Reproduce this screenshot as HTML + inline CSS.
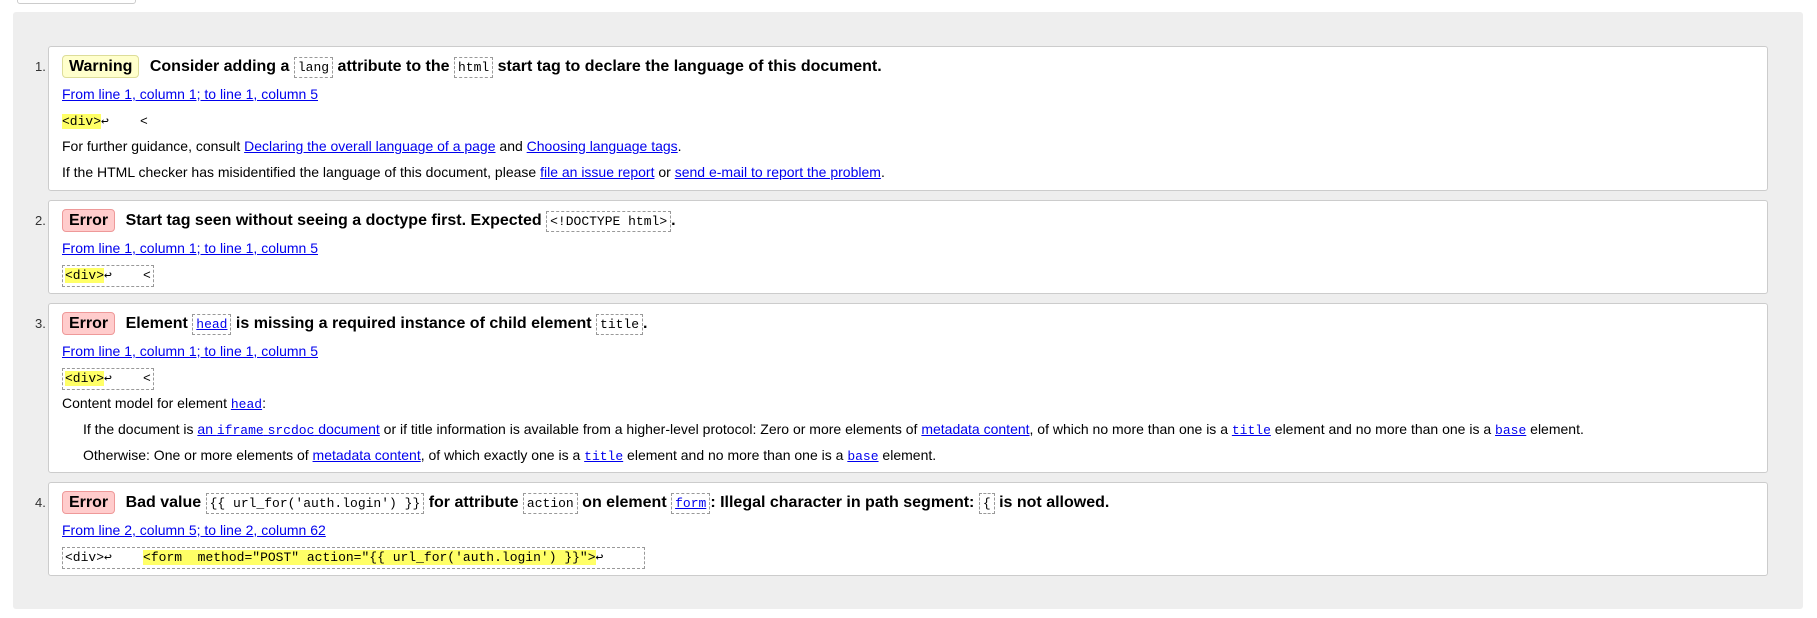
<!DOCTYPE html>
<html><head><meta charset="utf-8"><style>
body{margin:0;width:1817px;height:618px;background:#fff;font-family:"Liberation Sans",Arial,sans-serif;font-size:14px;color:#000;position:relative;overflow:hidden}
.btn{position:absolute;left:17px;top:-6px;width:117px;height:8px;border:1px solid #ccc;border-radius:3px}
.panel{position:absolute;left:13px;top:12px;width:1790px;height:597px;background:#eee;border-radius:3px}
.card{position:absolute;left:48px;width:1720px;background:#fff;border:1px solid #ccc;border-radius:3px;box-sizing:border-box;padding:6px 0 0 13px}
.num{position:absolute;left:-27px;top:0;font-size:13px;font-weight:normal;color:#333}
.ln{position:relative;white-space:nowrap}
.h{height:28px;line-height:28px;font-weight:bold;font-size:16px}
.l{height:27px;line-height:27px}
.c{height:25px;line-height:25px}
.p{height:26px;line-height:26px}
a{color:#00e;text-decoration:underline}
.badge{display:inline-block;padding:0 6px;border-radius:4px;line-height:21px;margin-right:6px}
.w{background:#ffc;border:1px solid #dd9}
.e{background:#fcc;border:1px solid #e99}
code,.m{font-family:"Liberation Mono",monospace;font-weight:normal;font-size:13px}
.bx{border:1px dashed #999;padding:2px 3px}
.hl{background:#ff6}
.cb{display:inline-block;border:1px dashed #999;line-height:20px;padding:0 2px}
.ind{padding-left:21px}
</style></head><body>
<div class="btn"></div>
<div class="panel"></div>

<div class="card" style="top:46px;height:145px">
<div class="ln h"><span class="num">1.</span><span class="badge w">Warning</span> Consider adding a <code class="bx">lang</code> attribute to the <code class="bx">html</code> start tag to declare the language of this document.</div>
<div class="ln l"><a>From line 1, column 1; to line 1, column 5</a></div>
<div class="ln c"><code><span class="hl">&lt;div&gt;</span>↩&nbsp;&nbsp;&nbsp;&nbsp;&lt;</code></div>
<div class="ln p">For further guidance, consult <a>Declaring the overall language of a page</a> and <a>Choosing language tags</a>.</div>
<div class="ln p">If the HTML checker has misidentified the language of this document, please <a>file an issue report</a> or <a>send e-mail to report the problem</a>.</div>
</div>

<div class="card" style="top:200px;height:94px">
<div class="ln h"><span class="num">2.</span><span class="badge e">Error</span> Start tag seen without seeing a doctype first. Expected <code class="bx">&lt;!DOCTYPE html&gt;</code>.</div>
<div class="ln l"><a>From line 1, column 1; to line 1, column 5</a></div>
<div class="ln c"><code class="cb"><span class="hl">&lt;div&gt;</span>↩&nbsp;&nbsp;&nbsp;&nbsp;&lt;</code></div>
</div>

<div class="card" style="top:303px;height:170px">
<div class="ln h"><span class="num">3.</span><span class="badge e">Error</span> Element <code class="bx"><a>head</a></code> is missing a required instance of child element <code class="bx">title</code>.</div>
<div class="ln l"><a>From line 1, column 1; to line 1, column 5</a></div>
<div class="ln c"><code class="cb"><span class="hl">&lt;div&gt;</span>↩&nbsp;&nbsp;&nbsp;&nbsp;&lt;</code></div>
<div class="ln p">Content model for element <a class="m">head</a>:</div>
<div class="ln p ind">If the document is <a>an <span class="m">iframe</span> <span class="m">srcdoc</span> document</a> or if title information is available from a higher-level protocol: Zero or more elements of <a>metadata content</a>, of which no more than one is a <a class="m">title</a> element and no more than one is a <a class="m">base</a> element.</div>
<div class="ln p ind">Otherwise: One or more elements of <a>metadata content</a>, of which exactly one is a <a class="m">title</a> element and no more than one is a <a class="m">base</a> element.</div>
</div>

<div class="card" style="top:482px;height:94px">
<div class="ln h"><span class="num">4.</span><span class="badge e">Error</span> Bad value <code class="bx">{{ url_for('auth.login') }}</code> for attribute <code class="bx">action</code> on element <code class="bx"><a>form</a></code>: Illegal character in path segment: <code class="bx">{</code> is not allowed.</div>
<div class="ln l"><a>From line 2, column 5; to line 2, column 62</a></div>
<div class="ln c"><code class="cb">&lt;div&gt;↩&nbsp;&nbsp;&nbsp;&nbsp;<span class="hl">&lt;form&nbsp;&nbsp;method="POST" action="{{ url_for('auth.login') }}"&gt;</span>↩&nbsp;&nbsp;&nbsp;&nbsp;&nbsp;</code></div>
</div>
</body></html>
